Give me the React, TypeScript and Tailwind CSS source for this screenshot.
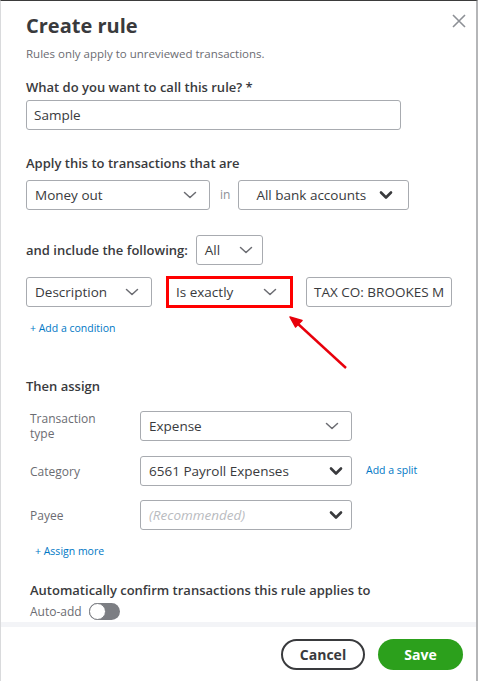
import React from "react";

const Chevron = ({ bold = false }: { bold?: boolean }) =>
  bold ? (
    <svg width="14" height="10" viewBox="0 0 14 10" className="shrink-0">
      <path d="M2 2.5 L7 7.5 L12 2.5" fill="none" stroke="#393a3d" strokeWidth="2.6" strokeLinecap="round" strokeLinejoin="round" />
    </svg>
  ) : (
    <svg width="14" height="10" viewBox="0 0 14 10" className="shrink-0">
      <path d="M1.5 2.5 L7 7.5 L12.5 2.5" fill="none" stroke="#6b6c72" strokeWidth="1.5" strokeLinecap="round" strokeLinejoin="round" />
    </svg>
  );

function Select({
  text,
  w,
  bold = false,
  placeholder = false,
  cls = "",
  pl = "pl-[8px]",
  pr = "pr-[12px]",
}: {
  text: string;
  w: string;
  bold?: boolean;
  placeholder?: boolean;
  cls?: string;
  pl?: string;
  pr?: string;
}) {
  return (
    <div
      className={`${w} h-[30px] flex items-center justify-between ${pl} ${pr} rounded-[3px] border border-[#a8abb0] bg-white ${cls}`}
    >
      <span
        className={`text-[13.5px] whitespace-nowrap ${placeholder ? "italic text-[#b9bbc0]" : "text-[#393a3d]"}`}
      >
        {text}
      </span>
      <Chevron bold={bold} />
    </div>
  );
}

export default function App() {
  return (
    <div
      className="w-[478px] h-[681px] bg-white border-t border-t-[#3b3b3b] border-l border-l-[#d9dadc] border-r-2 border-r-[#b5b6b8] relative overflow-hidden text-[#393a3d]"
      style={{ fontFamily: "'Open Sans', 'Noto Sans', sans-serif" }}
    >
      {/* close */}
      <svg className="absolute left-[451px] top-[13px]" width="14" height="14" viewBox="0 0 14 14">
        <path d="M1 1 L13 13 M13 1 L1 13" stroke="#8d9096" strokeWidth="1.6" />
      </svg>

      {/* arrow overlay */}
      <svg className="absolute left-0 top-0 pointer-events-none" width="478" height="681">
        <line x1="345" y1="367" x2="296" y2="322" stroke="#e8000b" strokeWidth="2.4" />
        <path d="M289 316 L301 319.5 L294.5 326 Z" fill="#e8000b" stroke="#e8000b" strokeWidth="1.5" strokeLinejoin="round" />
      </svg>

      <div className="h-[621px] pl-[25px] pt-[11px]">
        <div className="text-[20px] leading-[28px] font-bold">Create rule</div>
        <div className="mt-[6px] text-[11.5px] leading-[16px] text-[#6b6c72]">
          Rules only apply to unreviewed transactions.
        </div>
        <div className="mt-[17px] text-[13px] leading-[16px] font-semibold">
          What do you want to call this rule? *
        </div>
        <div className="mt-[5px] w-[375px] h-[30px] flex items-center px-[7px] rounded-[3px] border border-[#a8abb0] text-[13.5px]">
          Sample
        </div>

        <div className="mt-[25px] text-[13px] leading-[16px] font-semibold">
          Apply this to transactions that are
        </div>
        <div className="mt-[9px] flex items-center">
          <Select text="Money out" w="w-[184px]" />
          <span className="ml-[10px] mr-[8px] text-[12px] text-[#8d9096]">in</span>
          <Select text="All bank accounts" w="w-[171px]" bold pl="pl-[17px]" pr="pr-[16px]" cls="justify-start gap-[13px]" />
        </div>

        <div className="mt-[25px] flex items-center">
          <span className="text-[13px] leading-[16px] font-semibold">and include the following:</span>
          <Select text="All" w="w-[67px]" cls="ml-[8px] h-[29px]" pl="pl-[8px]" pr="pr-[9px]" />
        </div>

        <div className="mt-[12px] flex items-center h-[30px]">
          <Select text="Description" w="w-[126px]" />
          <div className="ml-[14px] w-[127px] h-[32px] flex items-center justify-between pl-[7px] pr-[13px] border-[3px] border-[#ff0000] bg-white">
            <span className="text-[13.5px] whitespace-nowrap">Is exactly</span>
            <Chevron />
          </div>
          <div className="ml-[13px] w-[146px] h-[30px] flex items-center pl-[7px] rounded-[3px] border border-[#a8abb0] overflow-hidden">
            <span className="text-[13.5px] whitespace-nowrap">TAX CO: BROOKES M</span>
          </div>
        </div>

        <div className="mt-[14px] ml-[4px] text-[10.5px] leading-[14px] text-[#0077c5]">+ Add a condition</div>

        <div className="mt-[43px] text-[13px] leading-[16px] font-semibold">Then assign</div>

        <div className="ml-[4px]">
          <div className="mt-[17px] flex items-center">
            <div className="w-[110px] text-[12px] leading-[15px] text-[#6b6c72]">
              Transaction
              <br />
              type
            </div>
            <Select text="Expense" w="w-[212px]" />
          </div>
          <div className="mt-[15px] flex items-center">
            <div className="w-[110px] text-[12px] leading-[15px] text-[#6b6c72]">Category</div>
            <Select text="6561 Payroll Expenses" w="w-[212px]" bold pr="pr-[8px]" />
            <span className="ml-[14px] text-[10.5px] text-[#0077c5]">Add a split</span>
          </div>
          <div className="mt-[14px] flex items-center">
            <div className="w-[110px] text-[12px] leading-[15px] text-[#6b6c72]">Payee</div>
            <Select text="(Recommended)" w="w-[212px]" bold placeholder pr="pr-[8px]" />
          </div>
          <div className="mt-[14px] ml-[5px] text-[10.5px] leading-[14px] text-[#0077c5]">+ Assign more</div>
          <div className="mt-[24px] text-[13px] leading-[16px] font-semibold">
            Automatically confirm transactions this rule applies to
          </div>
          <div className="mt-[5px] flex items-center h-[17px]">
            <span className="text-[12px] text-[#6b6c72]">Auto-add</span>
            <div className="ml-[7px] w-[31px] h-[17px] rounded-full bg-[#7c7e83] relative">
              <div className="absolute left-0 top-0 w-[17px] h-[17px] rounded-full bg-white border border-[#7c7e83]" />
            </div>
          </div>
        </div>
      </div>

      <div className="h-[5px] bg-[#f3f4f7]" />

      <div className="flex justify-end gap-[13px] pr-[13px] pt-[12px]">
        <div className="w-[84px] h-[31px] rounded-full border-2 border-[#393a3d] flex items-center justify-center text-[14px] font-bold">
          Cancel
        </div>
        <div className="w-[85px] h-[31px] rounded-full bg-[#2ca01c] flex items-center justify-center text-[14px] font-bold text-white">
          Save
        </div>
      </div>
    </div>
  );
}
